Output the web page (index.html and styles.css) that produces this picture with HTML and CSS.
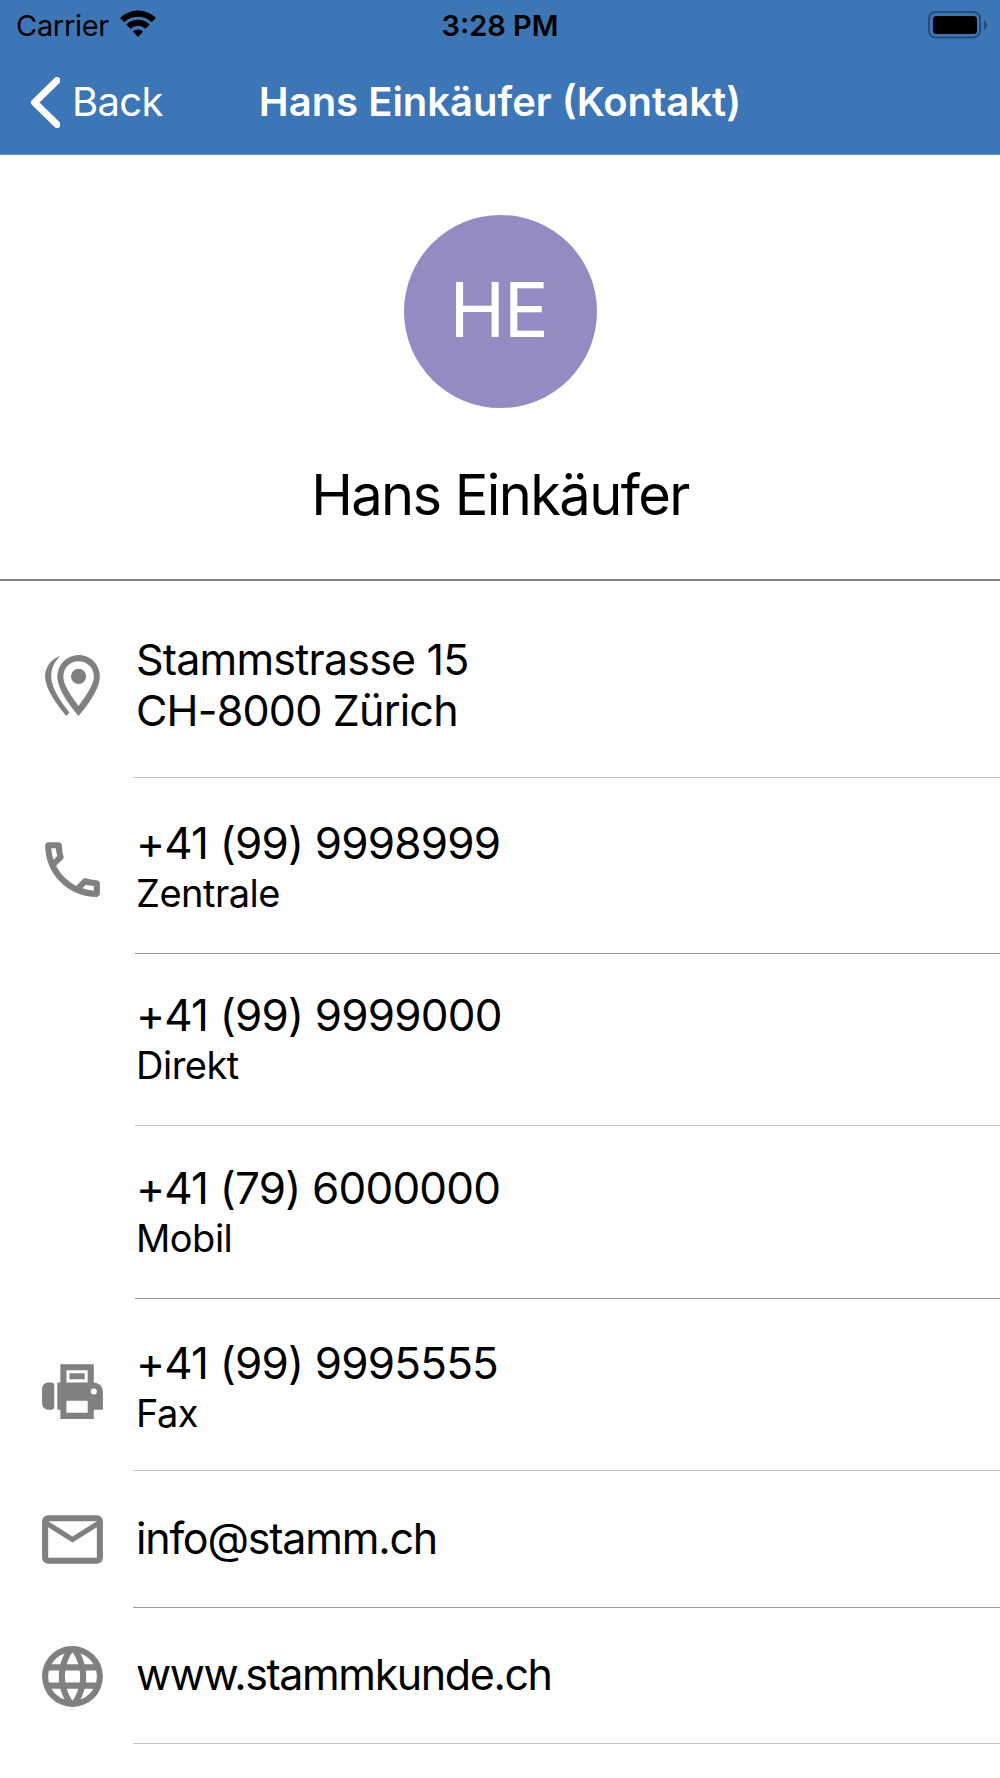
FILE: index.html
```
<!DOCTYPE html>
<html lang="de">
<head>
    <meta charset="UTF-8">
    <meta name="viewport" content="width=device-width, initial-scale=1.0">
    <title>Hans Einkäufer (Kontakt)</title>
    <link rel="stylesheet" href="styles.css">
</head>
<body>

<header class="header">
    <!-- Status bar -->
    <div class="status-bar">
        <div class="carrier">
            <span class="carrier-name">Carrier</span>
            <svg class="wifi" viewBox="0 0 36 27">
                <path d="M18 27L23 21.6A7.3 7.3 0 0 0 13 21.6Z"/>
                <path d="M6.2 14.6A16.8 16.8 0 0 1 29.8 14.6L25.4 18.8A10.600 10.600 0 0 0 10.600 18.800Z"/>
                <path d="M0 8A25.6 25.6 0 0 1 36 8L31.6 12.200A19.500 19.500 0 0 0 4.400 12.200Z"/>
            </svg>
        </div>
        <span class="time">3:28 PM</span>
        <svg class="battery" viewBox="0 0 60 28">
            <rect class="battery-frame" x="1" y="1" width="51" height="25.5" rx="6.5"/>
            <rect x="5" y="5" width="44" height="18" rx="3.5"/>
            <path class="battery-tip" d="M56 9C58 10.5 59 12 59 14S58 17.5 56 19Z"/>
        </svg>
    </div>

    <!-- Navigation bar -->
    <nav class="nav-bar">
        <a class="back" href="#">
            <svg class="chevron" viewBox="0 0 30 51">
                <path d="M27 3.500L4.500 25.500L27 47.500"/>
            </svg>
            <span class="back-label">Back</span>
        </a>
        <h1 class="title">Hans Einkäufer (Kontakt)</h1>
    </nav>
</header>

<section class="profile">
    <div class="avatar"><span class="initials">HE</span></div>
    <h2 class="name">Hans Einkäufer</h2>
</section>

<main class="details">
    <div class="row address">
        <svg class="icon" viewBox="0 0 24 24">
            <path d="M14 11.5A2.5 2.5 0 1 0 14 6.5A2.5 2.5 0 0 0 14 11.5M14 2C17.86 2 21 5.13 21 9C21 14.25 14 22 14 22S7 14.25 7 9A7 7 0 0 1 14 2M14 4A5 5 0 0 0 9 9C9 10 9 12 14 18.71C19 12 19 10 19 9A5 5 0 0 0 14 4M5 9C5 13.5 10.08 19.66 11 20.81L10 22S3 14.25 3 9C3 5.83 5.11 3.15 8 2.29C6.16 3.94 5 6.33 5 9Z" fill-rule="evenodd"/>
        </svg>
        <div class="content">
            <p class="value street">Stammstrasse 15</p>
            <p class="value city">CH-8000 Zürich</p>
        </div>
    </div>

    <div class="row central indent">
        <svg class="icon" viewBox="0 0 24 24">
            <path d="M20 15.5C18.8 15.5 17.5 15.3 16.4 14.9H16.1C15.8 14.9 15.6 15 15.4 15.2L13.2 17.4C10.4 15.9 8 13.6 6.6 10.8L8.8 8.6C9.1 8.3 9.2 7.9 9 7.6C8.7 6.5 8.5 5.2 8.5 4C8.5 3.5 8 3 7.5 3H4C3.5 3 3 3.5 3 4C3 13.4 10.6 21 20 21C20.5 21 21 20.5 21 20V16.5C21 16 20.5 15.5 20 15.5M5 5H6.5C6.6 5.9 6.8 6.8 7 7.6L5.8 8.8C5.4 7.6 5.1 6.3 5 5M19 19C17.7 18.9 16.4 18.6 15.2 18.2L16.4 17C17.2 17.2 18.1 17.4 19 17.4V19Z" fill-rule="evenodd"/>
        </svg>
        <div class="content">
            <p class="value number">+41 (99) 9998999</p>
            <p class="label">Zentrale</p>
        </div>
    </div>

    <div class="row direct indent">
        <div class="content">
            <p class="value number">+41 (99) 9999000</p>
            <p class="label">Direkt</p>
        </div>
    </div>

    <div class="row mobile indent">
        <div class="content">
            <p class="value number">+41 (79) 6000000</p>
            <p class="label">Mobil</p>
        </div>
    </div>

    <div class="row fax">
        <svg class="icon" viewBox="0 0 24 24">
            <path d="M4 9H5A1 1 0 0 1 6 10V17A1 1 0 0 1 5 18H4A2 2 0 0 1 2 16V11A2 2 0 0 1 4 9M8 3H19V9A3 3 0 0 1 22 12V18H19V21H8V18H7V9H8V3M10 5V9H17V5H10M10 15V19H17V15H10M19 11A1 1 0 1 0 19 13A1 1 0 0 0 19 11M11 6H16V8H11V6Z" fill-rule="evenodd"/>
        </svg>
        <div class="content">
            <p class="value number">+41 (99) 9995555</p>
            <p class="label">Fax</p>
        </div>
    </div>

    <div class="row email">
        <svg class="icon" viewBox="0 0 24 24">
            <path d="M4 4H20A2 2 0 0 1 22 6V18A2 2 0 0 1 20 20H4A2 2 0 0 1 2 18V6A2 2 0 0 1 4 4M12 11L20 6H4L12 11M4 18H20V8L12 13L4 8V18Z" fill-rule="evenodd"/>
        </svg>
        <div class="content">
            <p class="value mail">info@stamm.ch</p>
        </div>
    </div>

    <div class="row website">
        <svg class="icon" viewBox="0 0 24 24">
            <path d="M16.36 14C16.44 13.34 16.5 12.68 16.5 12C16.5 11.32 16.44 10.66 16.36 10H19.74C19.9 10.64 20 11.31 20 12C20 12.69 19.9 13.36 19.74 14M14.59 19.56C15.19 18.45 15.65 17.25 15.97 16H18.92C17.96 17.65 16.43 18.93 14.59 19.56M14.34 14H9.66C9.56 13.34 9.5 12.68 9.5 12C9.5 11.32 9.56 10.65 9.66 10H14.34C14.43 10.65 14.5 11.32 14.5 12C14.5 12.68 14.43 13.34 14.34 14M12 19.96C11.17 18.76 10.5 17.43 10.09 16H13.91C13.5 17.43 12.83 18.76 12 19.96M8 8H5.08C6.03 6.34 7.57 5.06 9.4 4.44C8.8 5.55 8.35 6.75 8 8M5.08 16H8C8.35 17.25 8.8 18.45 9.4 19.56C7.57 18.93 6.03 17.65 5.08 16M4.26 14C4.1 13.36 4 12.69 4 12C4 11.31 4.1 10.64 4.26 10H7.64C7.56 10.66 7.5 11.32 7.5 12C7.5 12.68 7.56 13.34 7.64 14M12 4.03C12.83 5.23 13.5 6.57 13.91 8H10.09C10.5 6.57 11.17 5.23 12 4.03M18.92 8H15.97C15.65 6.75 15.19 5.55 14.59 4.44C16.43 5.07 17.96 6.34 18.92 8M12 2C6.47 2 2 6.5 2 12A10 10 0 0 0 12 22A10 10 0 0 0 22 12A10 10 0 0 0 12 2Z" fill-rule="evenodd"/>
        </svg>
        <div class="content">
            <p class="value web">www.stammkunde.ch</p>
        </div>
    </div>
</main>

</body>
</html>
```
FILE: styles.css
```
* {
    box-sizing: border-box;
}

body {
    margin: 0;
    font-family: Inter, 'Liberation Sans', sans-serif;
    color: #000;
    background-color: #fefefe;
}

h1, h2, p {
    margin: 0;
    font-weight: 400;
    white-space: nowrap;
}

/* Header */
.header {
    height: 155px;
    background-color: #3c76b6;
    border-bottom: 1px solid #6394c8;
}

.status-bar {
    display: grid;
    grid-template-columns: 1fr auto 1fr;
    align-items: center;
    height: 50px;
    padding: 0 12px;
}

.carrier {
    display: flex;
    align-items: center;
    gap: 11px;
    padding-left: 4px;
    font-size: 29px;
    letter-spacing: -0.3px;
}

.wifi {
    width: 36px;
    height: 27px;
    margin-bottom: 3px;
}

.time {
    font-size: 29px;
    font-weight: 600;
}

.battery {
    width: 60px;
    height: 28px;
    justify-self: end;
}

.battery-frame {
    fill: none;
    stroke: #264b74;
    stroke-width: 2;
}

.battery-tip {
    fill: #264b74;
}

.nav-bar {
    display: grid;
    grid-template-columns: 1fr auto 1fr;
    align-items: center;
    height: 104px;
    padding: 0 30px;
    color: #fff;
}

.back {
    display: flex;
    align-items: center;
    gap: 12px;
    color: #fff;
    font-size: 40px;
    letter-spacing: -0.7px;
    text-decoration: none;
}

.back-label,
.title {
    padding-bottom: 2px;
}

.chevron {
    width: 30px;
    height: 51px;
    fill: none;
    stroke: #fff;
    stroke-width: 7;
    stroke-linecap: round;
    stroke-linejoin: round;
}

.title {
    font-size: 40px;
    font-weight: 600;
}

/* Avatar and name */
.profile {
    display: flex;
    flex-direction: column;
    align-items: center;
    height: 426px;
    padding-top: 60px;
    border-bottom: 2px solid #808483;
}

.avatar {
    display: flex;
    align-items: center;
    justify-content: center;
    width: 193px;
    height: 193px;
    border-radius: 50%;
    background-color: #938bc1;
    color: #fff;
    font-size: 75px;
}

.initials {
    padding: 0 3px 4px 0;
    letter-spacing: -1.5px;
}

.name {
    margin-top: 53px;
    font-size: 56px;
    line-height: 68px;
    letter-spacing: -1.6px;
}

/* Contact rows */
.row {
    display: grid;
    grid-template-columns: 97px 1fr;
    padding-left: 36px;
}

.icon {
    width: 73px;
    height: 73px;
    fill: #808080;
    align-self: center;
}

.content {
    grid-column: 2;
    display: flex;
    flex-direction: column;
    justify-content: center;
    padding-left: 3px;
    border-bottom: 1px solid #c4c4c4;
}

.indent {
    grid-template-columns: 99px 1fr;
}

.indent .content {
    padding-left: 1px;
}

.value {
    font-size: 43px;
    line-height: 51px;
}

.street {
    letter-spacing: -0.8px;
}

.city {
    letter-spacing: -0.8px;
}

.number {
    font-size: 44px;
    letter-spacing: -0.8px;
}

.mail {
    letter-spacing: -1.2px;
}

.web {
    letter-spacing: -1.4px;
}

.label {
    font-size: 38px;
    line-height: 49px;
    letter-spacing: -0.5px;
}

.address {
    height: 197px;
}

/* Text and icon sit a little below the middle of these rows */
.address .icon {
    margin-top: 11px;
}

.address .content {
    padding-top: 11px;
}

.central {
    height: 176px;
}

.central .icon {
    margin-top: 7px;
}

.central .content {
    padding-top: 4px;
}

.direct {
    height: 172px;
}

.mobile {
    height: 173px;
}

.mobile .content {
    padding-top: 2px;
}

.fax {
    height: 172px;
}

.fax .icon {
    margin-top: 12px;
}

.fax .content {
    padding-top: 6px;
}

.email {
    height: 137px;
}

.website {
    height: 136px;
}

.email .content,
.website .content {
    padding-bottom: 2px;
}

.central .content,
.mobile .content,
.email .content {
    border-bottom-color: #999;
}
```
